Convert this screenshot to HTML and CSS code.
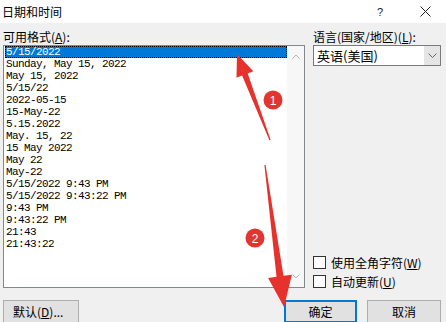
FILE: index.html
```html
<!DOCTYPE html>
<html lang="zh-CN">
<head>
  <meta charset="UTF-8">
  <title>日期和时间</title>
  <link rel="stylesheet" href="styles.css">
</head>
<body>
  <div class="dialog">
    <div class="titlebar">
      <span class="title">日期和时间</span>
      <span class="help">?</span>
      <svg class="close" width="11" height="11" viewBox="0 0 11 11"><path d="M0.5 0.5L10.5 10.5M10.5 0.5L0.5 10.5" stroke="#222" stroke-width="1"/></svg>
    </div>

    <div class="main">
      <div class="left">
        <div class="label">可用格式(<u>A</u>):</div>
        <div class="listbox">
          <div class="items">
            <div class="item selected">5/15/2022</div>
            <div class="item">Sunday, May 15, 2022</div>
            <div class="item">May 15, 2022</div>
            <div class="item">5/15/22</div>
            <div class="item">2022-05-15</div>
            <div class="item">15-May-22</div>
            <div class="item">5.15.2022</div>
            <div class="item">May. 15, 22</div>
            <div class="item">15 May 2022</div>
            <div class="item">May 22</div>
            <div class="item">May-22</div>
            <div class="item">5/15/2022 9:43 PM</div>
            <div class="item">5/15/2022 9:43:22 PM</div>
            <div class="item">9:43 PM</div>
            <div class="item">9:43:22 PM</div>
            <div class="item">21:43</div>
            <div class="item">21:43:22</div>
          </div>
          <div class="scrollbar">
            <svg width="8" height="5" viewBox="0 0 8 5"><path d="M0.5 4.5L4 1L7.5 4.5" fill="none" stroke="#b4b4b4"/></svg>
            <svg width="8" height="5" viewBox="0 0 8 5"><path d="M0.5 0.5L4 4L7.5 0.5" fill="none" stroke="#b4b4b4"/></svg>
          </div>
        </div>
      </div>

      <div class="right">
        <div class="label">语言(国家/地区)(<u>L</u>):</div>
        <div class="combo">
          <span class="combo-text">英语(美国)</span>
          <span class="combo-btn">
            <svg width="9" height="6" viewBox="0 0 9 6"><path d="M0.5 0.5L4.5 4.5L8.5 0.5" fill="none" stroke="#666"/></svg>
          </span>
        </div>
        <div class="checks">
          <label class="check"><span class="box"></span><span>使用全角字符(<u>W</u>)</span></label>
          <label class="check"><span class="box"></span><span>自动更新(<u>U</u>)</span></label>
        </div>
      </div>
    </div>

    <div class="buttons">
      <button class="btn btn-default-set">默认(<u>D</u>)...</button>
      <div class="btn-group">
        <button class="btn btn-ok">确定</button>
        <button class="btn">取消</button>
      </div>
    </div>

    <svg class="marks" width="446" height="322" viewBox="0 0 446 322">
      <polygon fill="#e5322d" points="237,54 253.3,71.3 247.7,73.4 270.6,139.8 269.4,140.2 242.1,75.6 236.5,77.7"/>
      <polygon fill="#e5322d" points="284,307 291.9,274.7 283.5,275.8 265.6,165 264.4,165 276.5,276.8 268.1,277.9"/>
      <circle cx="273" cy="100" r="9.5" fill="#e0362f"/>
      <text x="273" y="104.5" class="num">1</text>
      <circle cx="255" cy="238" r="9.5" fill="#e0362f"/>
      <text x="255" y="242.5" class="num">2</text>
    </svg>
  </div>
</body>
</html>
```
FILE: styles.css
```css
body {
  margin: 0;
  background: #f0f0f0;
  font-family: "Noto Sans CJK SC", sans-serif;
  font-size: 12px;
  color: #000;
}

u {
  text-decoration: underline;
  text-underline-offset: 1px;
}

.dialog {
  position: relative;
  width: 446px;
  height: 322px;
  overflow: hidden;
}

.titlebar {
  height: 23px;
  background: #fff;
  display: flex;
  align-items: center;
  padding-left: 2px;
}

.title {
  font-size: 12px;
  line-height: 14px;
  flex: 1;
}

.help {
  font-family: "Liberation Sans", sans-serif;
  font-size: 11px;
  margin-right: 37px;
  color: #222;
}

.close {
  margin-right: 15px;
}

.main {
  display: flex;
  padding-left: 3px;
}

.label {
  height: 16px;
  line-height: 16px;
  padding-top: 6px;
  white-space: nowrap;
}

.left {
  width: 302px;
}

.listbox {
  height: 243px;
  box-sizing: border-box;
  border: 1px solid #828790;
  background: #fff;
  display: flex;
}

.items {
  flex: 1;
  padding-left: 1px;
}

.item {
  height: 12px;
  line-height: 12px;
  padding-left: 1px;
  font-family: "Liberation Mono", monospace;
  font-size: 11px;
  letter-spacing: -0.6px;
  white-space: nowrap;
}

.item.selected {
  background: #0078d7;
  color: #fff;
  outline: 1px dotted #000;
  outline-offset: -1px;
}

.scrollbar {
  width: 17px;
  background: #f7f7f7;
  display: flex;
  flex-direction: column;
  justify-content: space-between;
  align-items: center;
  padding: 8px 0 8px;
}

.right {
  width: 128px;
  margin-left: 8px;
  display: flex;
  flex-direction: column;
}

.combo {
  height: 21px;
  box-sizing: border-box;
  border: 1px solid #7a7a7a;
  background: #fff;
  display: flex;
  align-items: stretch;
}

.combo-text {
  flex: 1;
  padding-left: 3px;
  line-height: 19px;
  font-size: 13px;
}

.combo-btn {
  width: 16px;
  background: #e5e5e5;
  display: flex;
  align-items: center;
  justify-content: center;
}

.checks {
  margin-top: auto;
  display: flex;
  flex-direction: column;
  gap: 6px;
}

.check {
  display: flex;
  align-items: center;
  height: 13px;
  gap: 5px;
  white-space: nowrap;
}

.box {
  width: 13px;
  height: 13px;
  box-sizing: border-box;
  border: 1px solid #333;
  background: #fff;
}

.buttons {
  display: flex;
  justify-content: space-between;
  padding: 12px 5px 0 3px;
}

.btn-group {
  display: flex;
  gap: 10px;
}

.btn {
  height: 23px;
  box-sizing: border-box;
  border: 1px solid #adadad;
  background: #e1e1e1;
  font-family: "Noto Sans CJK SC", sans-serif;
  font-size: 12px;
  padding: 0;
  width: 74px;
}

.btn-default-set {
  width: 76px;
  text-align: left;
  padding-left: 9px;
}

.btn-ok {
  width: 73px;
  border: 2px solid #0078d7;
}

.marks {
  position: absolute;
  top: 0;
  left: 0;
  pointer-events: none;
}

.num {
  fill: #fff;
  font-family: "Liberation Sans", sans-serif;
  font-size: 12px;
  text-anchor: middle;
}
```
